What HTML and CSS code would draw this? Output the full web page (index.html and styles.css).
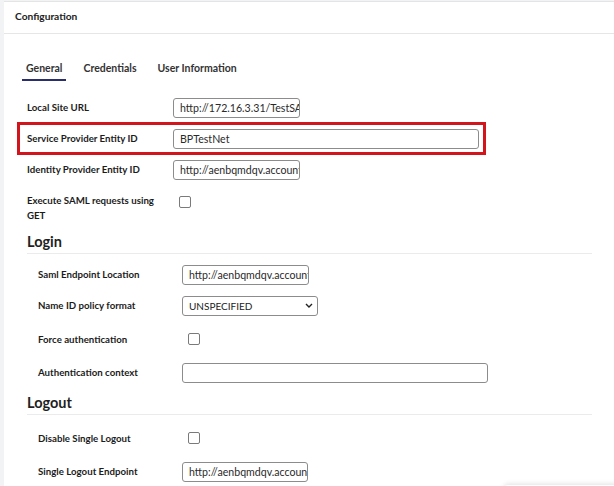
FILE: index.html
```html
<!DOCTYPE html>
<html lang="en">
<head>
<meta charset="utf-8">
<title>Configuration</title>
<link rel="stylesheet" href="styles.css">
</head>
<body>
<div class="card">
  <div class="card-header">Configuration</div>
  <div class="card-body">
    <div class="tabs">
      <div class="tab active">General</div>
      <div class="tab">Credentials</div>
      <div class="tab">User Information</div>
    </div>

    <div class="row">
      <div class="label">Local Site URL</div>
      <div class="input">http://172.16.3.31/TestSAML</div>
    </div>
    <div class="row row-highlight">
      <div class="label">Service Provider Entity ID</div>
      <div class="input input-fill">BPTestNet</div>
    </div>
    <div class="row">
      <div class="label">Identity Provider Entity ID</div>
      <div class="input">http://aenbqmdqv.accounts</div>
    </div>
    <div class="row row-check row-tall">
      <div class="label label-wrap">Execute SAML requests using GET</div>
      <div class="checkbox"></div>
    </div>

    <div class="section section-login">
      <div class="section-title">Login</div>
      <div class="section-body">
        <div class="row">
          <div class="label label-sub">Saml Endpoint Location</div>
          <div class="input input-sub">http://aenbqmdqv.accounts</div>
        </div>
        <div class="row">
          <div class="label label-sub">Name ID policy format</div>
          <div class="select">
            <span>UNSPECIFIED</span>
            <svg class="chev" width="8" height="5" viewBox="0 0 8 5"><path d="M1 1 L4 4 L7 1" fill="none" stroke="#222" stroke-width="1.4"/></svg>
          </div>
        </div>
        <div class="row row-check">
          <div class="label label-sub">Force authentication</div>
          <div class="checkbox"></div>
        </div>
        <div class="row">
          <div class="label label-sub">Authentication context</div>
          <div class="input input-wide"></div>
        </div>
      </div>
    </div>

    <div class="section section-logout">
      <div class="section-title">Logout</div>
      <div class="section-body">
        <div class="row row-check">
          <div class="label label-sub">Disable Single Logout</div>
          <div class="checkbox"></div>
        </div>
        <div class="row">
          <div class="label label-sub">Single Logout Endpoint</div>
          <div class="input input-short">http://aenbqmdqv.accounts</div>
        </div>
      </div>
    </div>
  </div>
  <div class="floating"></div>
</div>
</body>
</html>
```

FILE: styles.css
```css
* { box-sizing: border-box; }
html, body { margin: 0; padding: 0; }
body {
  background: #f2f3f5;
  font-family: "Lato", "Noto Sans", sans-serif;
  color: #1f1f1f;
  width: 614px;
  height: 486px;
  overflow: hidden;
}
.card {
  position: relative;
  margin-left: 4px;
  margin-top: 1px;
  background: #fff;
  border-top: 1px solid #e4e4e4;
  height: 485px;
  overflow: hidden;
}
.card-header {
  height: 32px;
  border-bottom: 1px solid #e6e6e6;
  padding-left: 11px;
  padding-bottom: 4px;
  display: flex;
  align-items: center;
  font-size: 10.2px;
  font-weight: 700;
  color: #222;
}
.card-body {
  padding-left: 13px;
}
.tabs {
  display: flex;
  margin-top: 27px;
  margin-left: 5px;
  gap: 13px;
  margin-bottom: 11px;
}
.tab {
  padding: 0 4px 4px;
  line-height: 14px;
  font-size: 10.5px;
  font-weight: 700;
  color: #333;
  border-bottom: 2px solid transparent;
}
.tab.active { border-bottom-color: #2a2f6b; }

.row {
  display: flex;
  align-items: center;
  height: 31px;
  padding-left: 10px;
}
.row-highlight {
  position: relative;
  width: 469px;
  padding-right: 7px;
}
.row-highlight::after {
  content: "";
  position: absolute;
  left: 0; right: 0; top: -1px; bottom: -1px;
  border: 3px solid #d2141c;
  pointer-events: none;
}
.row-check { height: 36px; }
.row-tall {
  height: 45px;
  align-items: flex-start;
  padding-top: 8px;
}
.label {
  width: 146px;
  flex: none;
  font-size: 9.7px;
  font-weight: 700;
  line-height: 15px;
  color: #1c1c1c;
}
.label-wrap { padding-right: 0; }
.label-sub { width: 144px; }
.input {
  width: 127px;
  height: 20px;
  border: 1px solid #8c8c8c;
  border-radius: 3px;
  font-size: 10.6px;
  line-height: 18px;
  padding: 0 6px;
  color: #2a2a2a;
  white-space: nowrap;
  overflow: hidden;
  background: #fff;
}
.input-fill { flex: 1; width: auto; }
.input-sub { width: 127px; }
.input-short { width: 126px; }
.input-wide { width: 306px; }
.checkbox {
  width: 12px;
  height: 12px;
  border: 1px solid #7a7a7a;
  border-radius: 2px;
  margin-left: 6px;
  background: #fff;
}
.row-tall .checkbox { margin-top: 3px; }
.select {
  width: 136px;
  height: 20px;
  border: 1px solid #8c8c8c;
  border-radius: 3px;
  font-size: 10px;
  padding: 0 4px 0 6px;
  color: #222;
  display: flex;
  align-items: center;
  justify-content: space-between;
}
.section { margin-left: 10px; }
.section-login { margin-top: 2px; }
.section-logout { margin-top: 5px; }
.section-title {
  font-size: 14.5px;
  font-weight: 700;
  line-height: 20px;
  color: #1f1f1f;
  border-bottom: 1px solid #ebebeb;
  padding-bottom: 1px;
  width: 565px;
}
.section-body {
  padding-top: 5px;
  margin-left: 1px;
}
.floating {
  position: absolute;
  left: 500px;
  top: 483px;
  width: 200px;
  height: 40px;
  background: #fff;
  box-shadow: 0 -1px 5px rgba(0,0,0,0.12);
  border-radius: 4px;
}
```
